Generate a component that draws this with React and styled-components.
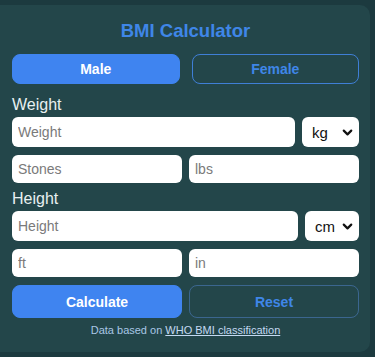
import React from 'react'
import styled, { createGlobalStyle } from 'styled-components'
import { ChevronDown } from 'lucide-react'

const Global = createGlobalStyle`
  html, body {
    margin: 0;
    padding: 0;
    background: #1c3a3f;
    font-family: "Liberation Sans", Arial, sans-serif;
  }
`

const Page = styled.div`
  width: 375px;
  height: 357px;
  padding: 5px 5px 5px 0;
  box-sizing: border-box;
`

const Card = styled.div`
  background: #23464a;
  border-radius: 0 10px 10px 0;
  height: 347px;
  box-sizing: border-box;
  padding: 15px 11px 0 12px;
  display: flex;
  flex-direction: column;
`

const Title = styled.h1`
  margin: 0 0 12px;
  text-align: center;
  color: #3f86e8;
  font-size: 18.5px;
  font-weight: 700;
  line-height: 22px;
`

const Row = styled.div`
  display: flex;
  gap: ${p => p.$gap || 7}px;
  margin-bottom: ${p => p.$mb || 0}px;
`

const Btn = styled.button`
  flex: 1;
  height: ${p => p.$h || 30}px;
  border-radius: 8px;
  font-family: inherit;
  font-size: 14px;
  font-weight: 700;
  cursor: pointer;
  background: ${p => (p.$primary ? '#3f84f0' : 'transparent')};
  color: ${p => (p.$primary ? '#ffffff' : '#3f86e8')};
  border: 1px solid ${p => (p.$primary ? '#3f84f0' : p.$muted ? 'rgba(80, 130, 200, 0.55)' : '#3f7fd6')};
`

const Label = styled.div`
  color: #e8f0f1;
  font-size: 16px;
  line-height: 18px;
  margin: 0 0 3px;
`

const Input = styled.input`
  flex: 1;
  min-width: 0;
  height: ${p => p.$h || 30}px;
  box-sizing: border-box;
  border: none;
  border-radius: 6px;
  background: #ffffff;
  padding: 0 6px;
  font-family: inherit;
  font-size: 14px;
  color: #222;
  outline: none;
  &::placeholder {
    color: #7a7a7a;
  }
`

const SelectWrap = styled.div`
  position: relative;
  width: ${p => p.$w}px;
  height: 30px;
`

const Select = styled.select`
  appearance: none;
  width: 100%;
  height: 100%;
  border: none;
  border-radius: 6px;
  background: #ffffff;
  padding: 0 0 0 10px;
  font-family: inherit;
  font-size: 15px;
  color: #111;
  outline: none;
`

const Arrow = styled(ChevronDown)`
  position: absolute;
  right: 4px;
  top: 8px;
  pointer-events: none;
  color: #111;
`

const Footer = styled.p`
  margin: 6px 0 0;
  text-align: center;
  font-size: 11px;
  color: #a9c6e6;
  a {
    color: #c4daf2;
    text-decoration: underline;
  }
`

const UnitSelect = ({ w, options }) => (
  <SelectWrap $w={w}>
    <Select defaultValue={options[0]}>
      {options.map(o => (
        <option key={o} value={o}>{o}</option>
      ))}
    </Select>
    <Arrow size={15} strokeWidth={3.5} />
  </SelectWrap>
)

const App = () => {
  return (
    <Page>
      <Global />
      <Card>
        <Title>BMI Calculator</Title>
        <Row $gap={12} $mb={12}>
          <Btn $primary>Male</Btn>
          <Btn>Female</Btn>
        </Row>
        <Label>Weight</Label>
        <Row $mb={8}>
          <Input placeholder="Weight" />
          <UnitSelect w={57} options={['kg', 'lbs', 'st']} />
        </Row>
        <Row $mb={7}>
          <Input $h={28} placeholder="Stones" />
          <Input $h={28} placeholder="lbs" />
        </Row>
        <Label>Height</Label>
        <Row $mb={8}>
          <Input placeholder="Height" />
          <UnitSelect w={54} options={['cm', 'ft', 'in']} />
        </Row>
        <Row $mb={8}>
          <Input $h={28} placeholder="ft" />
          <Input $h={28} placeholder="in" />
        </Row>
        <Row>
          <Btn $primary $h={33}>Calculate</Btn>
          <Btn $muted $h={33}>Reset</Btn>
        </Row>
        <Footer>
          Data based on <a href="#who">WHO BMI classification</a>
        </Footer>
      </Card>
    </Page>
  )
}

export default App
